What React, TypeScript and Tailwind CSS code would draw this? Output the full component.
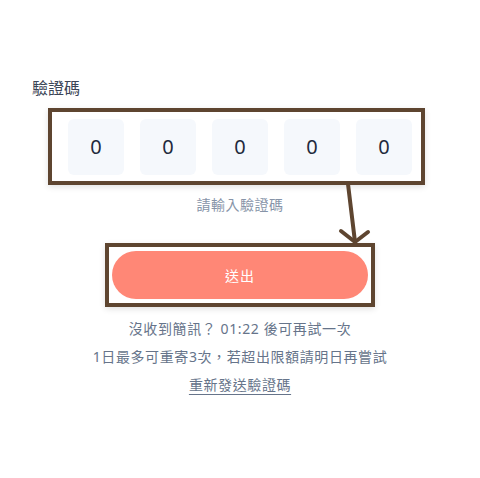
import React from "react";

const FONT = { fontFamily: '"Noto Sans", "Noto Sans CJK TC", sans-serif' };

const digits = ["0", "0", "0", "0", "0"];

export default function App() {
  return (
    <div className="relative w-[480px] h-[478px] bg-white" style={FONT}>
      <div className="pt-[76px] pl-[32px]">
        <div className="text-[16px] leading-6 text-[#3b4556]">驗證碼</div>
      </div>

      {/* code inputs, with the brown highlight frame */}
      <div className="mt-2 ml-[48px] w-[377px] border-4 border-[#5e4530] pl-4 pr-[9px] pt-[7px] pb-[6px] shadow-[0_2px_6px_rgba(0,0,0,0.12)]">
        <div className="flex gap-4">
          {digits.map((d, i) => (
            <div
              key={i}
              className="w-14 h-14 rounded-md bg-[#f5f8fc] flex items-center justify-center text-[20px] text-[#1f2a3c]"
            >
              {d}
            </div>
          ))}
        </div>
      </div>

      <div className="mt-[10px] text-center text-[14px] leading-5 tracking-[0.5px] text-[#8794a8]">請輸入驗證碼</div>

      {/* submit button, framed */}
      <div className="mt-[28px] ml-[105px] w-[270px] border-4 border-[#5e4530] px-[3px] pt-1 pb-1 shadow-[0_2px_6px_rgba(0,0,0,0.12)]">
        <button className="w-64 h-12 rounded-full bg-[#ff8776] text-white text-[14px] tracking-[1px]">送出</button>
      </div>

      <div className="mt-[8px] flex flex-col items-center text-[14px] leading-7 tracking-[0.6px] text-[#66748a]">
        <div>沒收到簡訊？ 01:22 後可再試一次</div>
        <div>1日最多可重寄3次，若超出限額請明日再嘗試</div>
        <div className="underline underline-offset-4">重新發送驗證碼</div>
      </div>

      {/* arrow annotation */}
      <svg className="absolute left-0 top-0 pointer-events-none" width="480" height="478">
        <g stroke="#5e4530" strokeWidth="4" strokeLinecap="round" fill="none">
          <line x1="348" y1="184" x2="355" y2="242" />
          <line x1="341" y1="231" x2="355" y2="242" />
          <line x1="368" y1="232" x2="355" y2="242" />
        </g>
      </svg>
    </div>
  );
}
